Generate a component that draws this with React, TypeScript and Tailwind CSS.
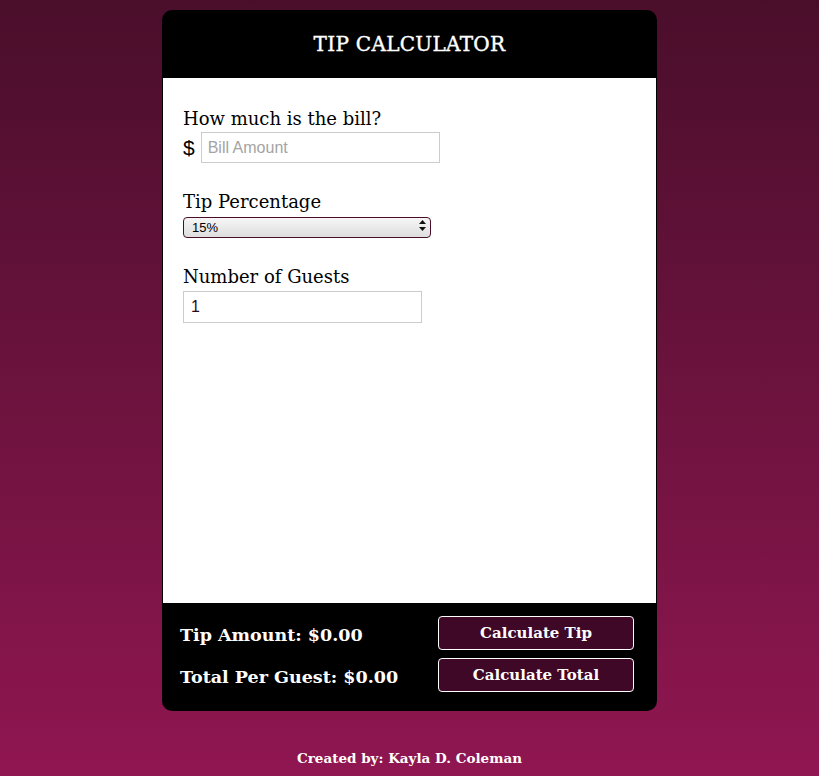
import React from "react";

export default function App() {
  return (
    <div
      className="min-h-screen w-full flex flex-col items-center bg-gradient-to-b from-[#4a0e2b] to-[#901651]"
      style={{ fontFamily: '"DejaVu Serif", serif' }}
    >
      {/* Card */}
      <div className="mt-[10px] w-[495px] rounded-[10px] overflow-hidden bg-black flex flex-col">
        {/* Header */}
        <div className="h-[68px] flex items-center justify-center">
          <h1 className="text-white text-[20px] font-normal tracking-[0.3px] [-webkit-text-stroke:0.4px_white]">TIP CALCULATOR</h1>
        </div>

        {/* Form */}
        <div className="mx-px bg-white h-[525px] px-[20px] pt-[29px] text-black">
          <label className="block text-[18px] leading-[24px]">How much is the bill?</label>
          <div className="flex items-center mt-[1px]">
            <span className="text-[21px] mr-[6px]" style={{ fontFamily: '"Liberation Sans", sans-serif' }}>$</span>
            <input
              type="text"
              placeholder="Bill Amount"
              className="w-[239px] h-[31px] border border-[#cccccc] px-[6px] text-[16px] placeholder:text-[#a4a4a4] outline-none"
              style={{ fontFamily: '"Liberation Sans", sans-serif' }}
            />
          </div>

          <label className="block text-[18px] leading-[24px] mt-[26px]">Tip Percentage</label>
          <div className="relative w-[248px] h-[21px] mt-[1px]">
            <select
              defaultValue="15"
              className="appearance-none w-full h-full rounded-[4px] border border-[#4a0e2b] bg-gradient-to-b from-[#f6f6f6] to-[#dedede] pl-[8px] text-[13px] text-black outline-none"
              style={{ fontFamily: '"Liberation Sans", sans-serif' }}
            >
              <option value="15">15%</option>
              <option value="20">20%</option>
              <option value="25">25%</option>
            </select>
            <svg className="absolute right-[5px] top-[5px] pointer-events-none" width="7" height="11" viewBox="0 0 7 11">
              <path d="M3.5 0 L7 4 L0 4 Z" fill="#111" />
              <path d="M3.5 11 L7 7 L0 7 Z" fill="#111" />
            </svg>
          </div>

          <label className="block text-[18px] leading-[24px] mt-[29px]">Number of Guests</label>
          <input
            type="text"
            defaultValue="1"
            className="w-[239px] h-[32px] border border-[#cccccc] px-[7px] text-[16px] text-[#2a0a18] outline-none mt-[2px]"
            style={{ fontFamily: '"Liberation Sans", sans-serif' }}
          />
        </div>

        {/* Footer */}
        <div className="h-[108px] flex items-start justify-between pl-[18px] pr-[23px]">
          <div className="flex flex-col gap-[18px] pt-[20px] text-white text-[17.5px] leading-[24px] font-bold">
            <div>Tip Amount: $0.00</div>
            <div>Total Per Guest: $0.00</div>
          </div>
          <div className="flex flex-col gap-[8px] pt-[13px]">
            <button className="w-[196px] h-[34px] rounded-[4px] border border-white bg-[#3f0826] text-white text-[15px] font-bold">
              Calculate Tip
            </button>
            <button className="w-[196px] h-[34px] rounded-[4px] border border-white bg-[#3f0826] text-white text-[15px] font-bold">
              Calculate Total
            </button>
          </div>
        </div>
      </div>

      <p className="mt-[37px] text-white text-[13.5px] font-bold">Created by: Kayla D. Coleman</p>
    </div>
  );
}
